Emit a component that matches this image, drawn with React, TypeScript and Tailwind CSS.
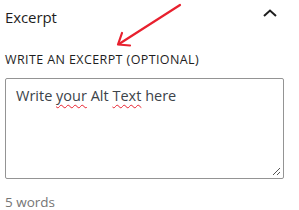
export default function App() {
  return (
    <div
      className="relative h-[210px] w-[299px] overflow-hidden bg-white text-[#1e1e1e]"
      style={{ fontFamily: '"Open Sans", "Noto Sans", sans-serif' }}
    >
      <div className="flex h-[34px] items-center justify-between pl-[5px] pr-[21px]">
        <span className="text-[15px] font-medium tracking-[-0.1px]">Excerpt</span>
        <svg width="16" height="10" viewBox="0 0 16 10" className="mt-[-8px]">
          <path d="M2 8 L8 2.5 L14 8" fill="none" stroke="#1e1e1e" strokeWidth="2" />
        </svg>
      </div>

      {/* red annotation arrow */}
      <svg
        width="70"
        height="50"
        viewBox="0 0 70 50"
        className="absolute left-[114px] top-0"
      >
        <path d="M66 5 L5 44" stroke="#e8202e" strokeWidth="2.2" strokeLinecap="round" fill="none" />
        <path d="M8 33 L4 44.5 L16 45.5" stroke="#e8202e" strokeWidth="2.2" strokeLinecap="round" strokeLinejoin="round" fill="none" />
      </svg>

      <div className="px-[5px] pt-[18px]">
        <div className="text-[12.5px] font-medium uppercase leading-[15px] tracking-[0.4px] text-[#1e1e1e]">
          Write an excerpt (optional)
        </div>
        <div className="relative mt-[11px] h-[101px] w-[279px] rounded-[2px] border border-[#949494] px-[10px] pt-[7px]">
          <p className="text-[14.5px] leading-[20px] text-[#3c434a]">
            Write{" "}
            <span className="underline decoration-[#e8202e] decoration-wavy decoration-1 underline-offset-[3px]">
              your
            </span>{" "}
            Alt{" "}
            <span className="underline decoration-[#e8202e] decoration-wavy decoration-1 underline-offset-[3px]">
              Text
            </span>{" "}
            here
          </p>
          <svg width="9" height="9" viewBox="0 0 9 9" className="absolute bottom-[2px] right-[2px]">
            <path d="M8 1 L1 8 M8 5 L5 8" stroke="#555" strokeWidth="1" fill="none" />
          </svg>
        </div>
        <div className="mt-[14px] text-[13.5px] leading-[18px] text-[#757575]">5 words</div>
      </div>
    </div>
  );
}
